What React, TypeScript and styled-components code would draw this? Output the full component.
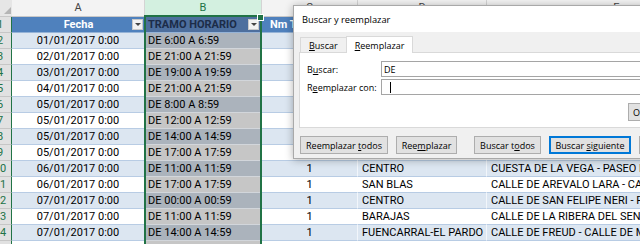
import React from "react";
import styled, { createGlobalStyle, css } from "styled-components";

const Global = createGlobalStyle`
  html, body { margin: 0; padding: 0; background: #fff; overflow: hidden; }
  #root { width: 640px; height: 244px; }
`;

const COLS = "12px 133px 117px 96px 129px 260px";

const Screen = styled.div`
  position: relative;
  width: 640px;
  height: 244px;
  overflow: hidden;
  background: #fff;
  font-family: Roboto, "Liberation Sans", Arial, sans-serif;
  font-size: 11px;
  color: #000;
`;

const Sheet = styled.div`
  display: flex;
  flex-direction: column;
`;

const GridRow = styled.div`
  display: grid;
  grid-template-columns: ${COLS};
  height: 16px;
`;

const ColHeadRow = styled(GridRow)`
  height: 17px;
`;

const Corner = styled.div`
  position: relative;
  background: #e6e6e6;
  border-bottom: 1px solid #c8c8c8;
  box-sizing: border-box;
  &::after {
    content: "";
    position: absolute;
    right: 1px;
    bottom: 2px;
    border-style: solid;
    border-width: 0 0 7px 7px;
    border-color: transparent transparent #b5b5b5 transparent;
  }
`;

const ColHead = styled.div<{ $sel?: boolean }>`
  display: flex;
  align-items: center;
  justify-content: center;
  box-sizing: border-box;
  background: ${(p) => (p.$sel ? "#d3f0e0" : "#f3f3f3")};
  color: ${(p) => (p.$sel ? "#217346" : "#444")};
  border-right: 1px solid #d4d4d4;
  border-bottom: 1px solid #c8c8c8;
  font-size: 11px;
  line-height: 16px;
`;

const RowHead = styled.div`
  overflow: hidden;
  box-sizing: border-box;
  background: #e1e1e1;
  border-right: 1px solid #217346;
  border-bottom: 1px solid #c6c6c6;
  color: #217346;
  font-size: 11px;
  line-height: 15px;
`;

const RowNum = styled.span`
  display: block;
  width: 22px;
  margin-left: -11px;
  text-align: center;
`;

const Cell = styled.div<{
  $band?: boolean;
  $sel?: boolean;
  $align?: "left" | "center";
}>`
  box-sizing: border-box;
  overflow: hidden;
  white-space: nowrap;
  line-height: 15px;
  padding: 0 ${(p) => (p.$align === "center" ? "0" : "4px")};
  text-align: ${(p) => p.$align ?? "left"};
  color: #000;
  border-right: 1px solid ${(p) => (p.$band ? "#f2f6fb" : "#fff")};
  ${(p) =>
    p.$sel
      ? css`
          background: ${p.$band ? "#abb3bc" : "#c6c6c6"};
          border-bottom: 1px solid #d2d6db;
          border-right: none;
          padding-left: 3px;
        `
      : css`
          background: ${p.$band ? "#dce6f1" : "#ffffff"};
          border-bottom: 1px solid #b8cce4;
        `}
`;

const HeadCell = styled.div<{ $sel?: boolean; $align?: "left" | "center" }>`
  position: relative;
  box-sizing: border-box;
  overflow: hidden;
  white-space: nowrap;
  background: ${(p) => (p.$sel ? "#4d6f9e" : "#4f81bd")};
  color: ${(p) => (p.$sel ? "#1c2c48" : "#fff")};
  font-weight: bold;
  line-height: 15px;
  text-align: ${(p) => p.$align ?? "left"};
  padding: 0 ${(p) => (p.$align === "center" ? "0" : p.$sel ? "3px" : "8px")};
  border-bottom: 1px solid #95b3d7;
`;

const FilterButton = styled.span<{ $right: number }>`
  position: absolute;
  top: 2px;
  right: ${(p) => p.$right}px;
  width: 11px;
  height: 11px;
  box-sizing: border-box;
  background: #f2f2f2;
  border: 1px solid #c9c9c9;
  display: flex;
  align-items: center;
  justify-content: center;
  &::after {
    content: "";
    border-style: solid;
    border-width: 3px 3px 0 3px;
    border-color: #444 transparent transparent transparent;
  }
`;

const SelectionFrame = styled.div`
  position: absolute;
  left: 144px;
  top: 15px;
  width: 118px;
  height: 240px;
  box-sizing: border-box;
  border: 2px solid #217346;
  pointer-events: none;
  &::after {
    content: "";
    position: absolute;
    right: -4px;
    top: -3px;
    width: 5px;
    height: 5px;
    background: #217346;
    border: 1px solid #fff;
  }
`;

/* ---------- Dialog ---------- */

const Dialog = styled.div`
  position: absolute;
  left: 293px;
  top: 5px;
  width: 408px;
  height: 154px;
  box-sizing: border-box;
  background: #f0f0f0;
  border: 1px solid #a9a9a9;
  box-shadow: 0 1px 8px rgba(0, 0, 0, 0.3);
  font-family: "Open Sans", "Noto Sans", "Liberation Sans", sans-serif;
  font-size: 9px;
  color: #000;
  display: flex;
  flex-direction: column;
  overflow: hidden;
`;

const TitleBar = styled.div`
  height: 26px;
  flex-shrink: 0;
  background: #fff;
  display: flex;
  align-items: center;
  padding-left: 8px;
  font-size: 9.3px;
`;

const Body = styled.div`
  display: flex;
  flex-direction: column;
  padding: 4px 5px 0 5px;
`;

const TabStrip = styled.div`
  display: flex;
  align-items: flex-end;
  padding-left: 1px;
  height: 16px;
`;

const Tab = styled.div<{ $active?: boolean }>`
  box-sizing: border-box;
  height: ${(p) => (p.$active ? "17px" : "15px")};
  padding: 0 8px;
  display: flex;
  align-items: center;
  background: ${(p) => (p.$active ? "#fff" : "#f0f0f0")};
  border: 1px solid #d9d9d9;
  border-bottom: none;
  margin-bottom: ${(p) => (p.$active ? "-1px" : "0")};
  position: relative;
  z-index: ${(p) => (p.$active ? 1 : 0)};
  ${(p) => !p.$active && "border-right: none;"}
`;

const Panel = styled.div`
  background: #fff;
  border: 1px solid #d9d9d9;
  height: 76px;
  box-sizing: border-box;
  padding: 8px 4px 0 7px;
  display: flex;
  flex-direction: column;
`;

const FieldRow = styled.div`
  display: grid;
  grid-template-columns: 74px 1fr;
  align-items: center;
  height: 16px;
  margin-bottom: 2px;
`;

const Input = styled.div`
  height: 16px;
  box-sizing: border-box;
  border: 1px solid #a5a5a5;
  background: #fff;
  display: flex;
  align-items: center;
  padding-left: 2px;
  margin-right: 6px;
`;

const Caret = styled.span`
  width: 1px;
  height: 11px;
  background: #000;
  margin-left: 6px;
`;

const OptionsRow = styled.div`
  display: flex;
  justify-content: flex-end;
  margin-top: 6px;
`;

const Button = styled.div<{ $default?: boolean; $w: number }>`
  box-sizing: border-box;
  flex-shrink: 0;
  width: ${(p) => p.$w}px;
  height: 18px;
  display: flex;
  align-items: center;
  justify-content: center;
  background: #e1e1e1;
  border: 1px solid ${(p) => (p.$default ? "#0078d7" : "#adadad")};
  ${(p) => p.$default && "box-shadow: inset 0 0 0 1px #0078d7;"}
  white-space: nowrap;
`;

const ButtonRow = styled.div`
  display: flex;
  gap: 17px;
  margin-top: 8px;
  padding-left: 1px;
`;

const ButtonGroup = styled.div`
  display: flex;
  gap: 8px;
`;

const Key = styled.span`
  text-decoration: underline;
`;

type RowData = {
  date: string;
  tramo: string;
  c: string;
  d: string;
  e: string;
};

const rows: RowData[] = [
  { date: "01/01/2017 0:00", tramo: "DE 6:00 A 6:59", c: "1", d: "CHAMBERI", e: "CALLE DE SANTA ENGRACIA - CALLE DE CARDENAL" },
  { date: "02/01/2017 0:00", tramo: "DE 21:00 A 21:59", c: "1", d: "TETUAN", e: "CALLE DE BRAVO MURILLO - CALLE DE LA PILARICA" },
  { date: "03/01/2017 0:00", tramo: "DE 19:00 A 19:59", c: "1", d: "SALAMANCA", e: "CALLE DE ALCALA - CALLE DE VELAZQUEZ" },
  { date: "04/01/2017 0:00", tramo: "DE 21:00 A 21:59", c: "1", d: "LATINA", e: "PASEO DE EXTREMADURA - CALLE DE LOS YEBENES" },
  { date: "05/01/2017 0:00", tramo: "DE 8:00 A 8:59", c: "1", d: "RETIRO", e: "CALLE DE O'DONNELL - CALLE DEL DOCTOR ESQUERDO" },
  { date: "05/01/2017 0:00", tramo: "DE 12:00 A 12:59", c: "1", d: "CENTRO", e: "GRAN VIA - CALLE DE LA MONTERA" },
  { date: "05/01/2017 0:00", tramo: "DE 14:00 A 14:59", c: "1", d: "ARGANZUELA", e: "PASEO DE LAS DELICIAS - CALLE DE EMBAJADORES" },
  { date: "05/01/2017 0:00", tramo: "DE 17:00 A 17:59", c: "1", d: "USERA", e: "CALLE DE MARCELO USERA - AVENIDA DE RAFAELA" },
  { date: "06/01/2017 0:00", tramo: "DE 11:00 A 11:59", c: "1", d: "CENTRO", e: "CUESTA DE LA VEGA - PASEO DEL REY" },
  { date: "06/01/2017 0:00", tramo: "DE 17:00 A 17:59", c: "1", d: "SAN BLAS", e: "CALLE DE AREVALO LARA - CALLE DE ALCALA" },
  { date: "07/01/2017 0:00", tramo: "DE 00:00 A 00:59", c: "1", d: "CENTRO", e: "CALLE DE SAN FELIPE NERI - PLAZA MAYOR" },
  { date: "07/01/2017 0:00", tramo: "DE 11:00 A 11:59", c: "1", d: "BARAJAS", e: "CALLE DE LA RIBERA DEL SENA - AVENIDA" },
  { date: "07/01/2017 0:00", tramo: "DE 14:00 A 14:59", c: "1", d: "FUENCARRAL-EL PARDO", e: "CALLE DE FREUD - CALLE DE MANUEL" },
  { date: "08/01/2017 0:00", tramo: "DE 9:00 A 9:59", c: "1", d: "MONCLOA-ARAVACA", e: "CALLE DE LA PRINCESA - PLAZA DE ESPAÑA" },
];

export default function App() {
  return (
    <Screen>
      <Global />
      <Sheet>
        <ColHeadRow>
          <Corner />
          <ColHead>A</ColHead>
          <ColHead $sel>B</ColHead>
          <ColHead>C</ColHead>
          <ColHead>D</ColHead>
          <ColHead>E</ColHead>
        </ColHeadRow>
        <GridRow>
          <RowHead>
            <RowNum>1</RowNum>
          </RowHead>
          <HeadCell $align="center">
            Fecha
            <FilterButton $right={2} />
          </HeadCell>
          <HeadCell $sel>
            TRAMO HORARIO
            <FilterButton $right={3} />
          </HeadCell>
          <HeadCell>Nm Tramo</HeadCell>
          <HeadCell>Distrito</HeadCell>
          <HeadCell>Calle</HeadCell>
        </GridRow>
        {rows.map((r, i) => {
          const band = i % 2 === 0;
          return (
            <GridRow key={i}>
              <RowHead>
                <RowNum>{i + 2}</RowNum>
              </RowHead>
              <Cell $band={band} $align="center">
                {r.date}
              </Cell>
              <Cell $band={band} $sel>
                {r.tramo}
              </Cell>
              <Cell $band={band} $align="center">
                {r.c}
              </Cell>
              <Cell $band={band}>{r.d}</Cell>
              <Cell $band={band}>{r.e}</Cell>
            </GridRow>
          );
        })}
      </Sheet>
      <SelectionFrame />

      <Dialog>
        <TitleBar>Buscar y reemplazar</TitleBar>
        <Body>
          <TabStrip>
            <Tab>
              <span>
                <Key>B</Key>uscar
              </span>
            </Tab>
            <Tab $active>
              <span>
                <Key>R</Key>eemplazar
              </span>
            </Tab>
          </TabStrip>
          <Panel>
            <FieldRow>
              <span>
                B<Key>u</Key>scar:
              </span>
              <Input>DE</Input>
            </FieldRow>
            <FieldRow>
              <span>
                R<Key>e</Key>emplazar con:
              </span>
              <Input>
                <Caret />
              </Input>
            </FieldRow>
            <OptionsRow>
              <Button $w={62}>
                <span>
                  Opcio<Key>n</Key>es &gt;&gt;
                </span>
              </Button>
            </OptionsRow>
          </Panel>
          <ButtonRow>
            <ButtonGroup>
              <Button $w={88}>
                <span>
                  Reemplazar <Key>t</Key>odos
                </span>
              </Button>
              <Button $w={61}>
                <span>
                  Ree<Key>m</Key>plazar
                </span>
              </Button>
            </ButtonGroup>
            <ButtonGroup>
              <Button $w={67}>
                <span>
                  Buscar t<Key>o</Key>dos
                </span>
              </Button>
              <Button $w={82} $default>
                <span>
                  Buscar <Key>s</Key>iguiente
                </span>
              </Button>
              <Button $w={56}>Cerrar</Button>
            </ButtonGroup>
          </ButtonRow>
        </Body>
      </Dialog>
    </Screen>
  );
}
